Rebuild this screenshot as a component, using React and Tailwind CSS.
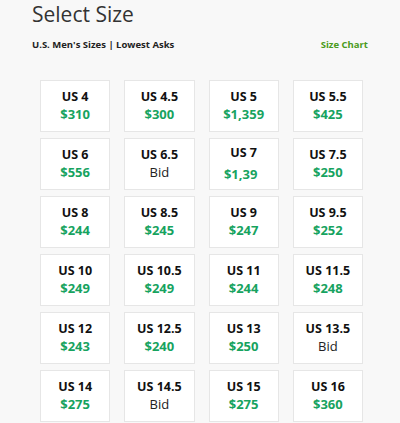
const sizes = [
  { size: "US 4", price: "$310" },
  { size: "US 4.5", price: "$300" },
  { size: "US 5", price: "$1,359" },
  { size: "US 5.5", price: "$425" },
  { size: "US 6", price: "$556" },
  { size: "US 6.5", price: null },
  { size: "US 7", price: "$1,39", glitch: true },
  { size: "US 7.5", price: "$250" },
  { size: "US 8", price: "$244" },
  { size: "US 8.5", price: "$245" },
  { size: "US 9", price: "$247" },
  { size: "US 9.5", price: "$252" },
  { size: "US 10", price: "$249" },
  { size: "US 10.5", price: "$249" },
  { size: "US 11", price: "$244" },
  { size: "US 11.5", price: "$248" },
  { size: "US 12", price: "$243" },
  { size: "US 12.5", price: "$240" },
  { size: "US 13", price: "$250" },
  { size: "US 13.5", price: null },
  { size: "US 14", price: "$275" },
  { size: "US 14.5", price: null },
  { size: "US 15", price: "$275" },
  { size: "US 16", price: "$360" },
];

function SizeCell({ item }) {
  return (
    <button className="h-[52px] bg-white border border-[#e6e6e6] flex flex-col items-center justify-center leading-none">
      <span className="text-[12.5px] font-bold text-[#111]">{item.size}</span>
      {item.price ? (
        <span
          className={
            "mt-[5px] text-[13px] font-bold text-[#17a35f]" +
            (item.glitch ? " pr-[6px] pt-[4px]" : "")
          }
        >
          {item.price}
        </span>
      ) : (
        <span className="mt-[5px] text-[13px] text-[#222]">Bid</span>
      )}
    </button>
  );
}

export default function App() {
  return (
    <div
      className="w-[400px] h-[423px] overflow-hidden bg-[#f8f8f8] px-[32px]"
      style={{ fontFamily: '"Open Sans", "Liberation Sans", sans-serif' }}
    >
      {/* Header */}
      <h1 className="pt-[1px] text-[21px] leading-[26px] text-[#333] font-normal">
        Select Size
      </h1>
      <div className="mt-[11px] flex justify-between items-center text-[9.5px] font-bold leading-[14px]">
        <span className="text-[#222]">U.S. Men's Sizes | Lowest Asks</span>
        <span className="text-[#4a9b20]">Size Chart</span>
      </div>

      {/* Size grid */}
      <div className="mt-[28px] ml-[8px] w-[323px] grid grid-cols-4 gap-x-[14px] gap-y-[6px]">
        {sizes.map((item) => (
          <SizeCell key={item.size} item={item} />
        ))}
      </div>
    </div>
  );
}
